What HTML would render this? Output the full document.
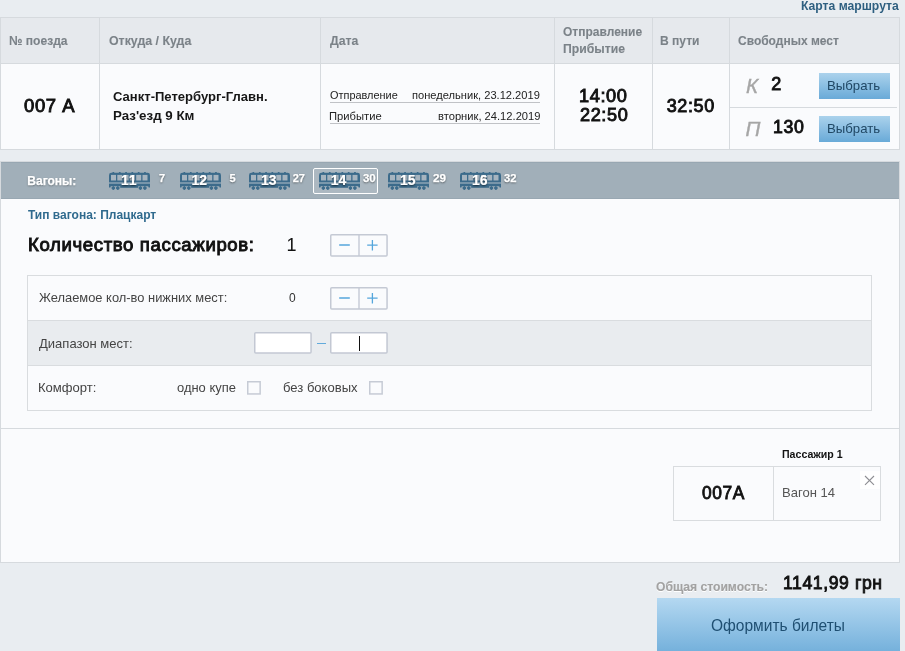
<!DOCTYPE html>
<html lang="ru"><head><meta charset="utf-8"><title>Билеты</title>
<style>
html,body{margin:0;padding:0}
body{width:905px;height:651px;overflow:hidden;background:#e9edf1;font-family:"Liberation Sans", sans-serif;position:relative}
.t{position:absolute;white-space:nowrap;transform-origin:0 50%;line-height:normal}
.a{position:absolute;box-sizing:border-box}
.tl{position:absolute;left:0;top:0;width:905px;height:651px;will-change:transform}
.wg{position:absolute;top:172px}
.btn{position:absolute;box-sizing:border-box;background:linear-gradient(#abd2ec,#69aad8)}
.st{position:absolute;box-sizing:border-box;border:1px solid #c4cad3;background:#fafbfd;border-radius:1px}
.inp{position:absolute;box-sizing:border-box;border:1px solid #bfc6d0;background:#fff;border-radius:1px}
.cb{position:absolute;box-sizing:border-box;width:14px;height:14px;border:1px solid #c4cad3;background:#fafbfd}
</style></head><body>
<!-- table -->
<div class="a" style="left:0;top:17px;width:900px;height:133px;border:1px solid #d6dade;background:#fafbfd"></div>
<div class="a" style="left:1px;top:18px;width:898px;height:45px;background:#e6e9ed"></div>
<div class="a" style="left:1px;top:63px;width:898px;height:1px;background:#d6dade"></div>
<div class="a" style="left:99px;top:18px;width:1px;height:131px;background:#d6dade"></div>
<div class="a" style="left:320px;top:18px;width:1px;height:131px;background:#d6dade"></div>
<div class="a" style="left:554px;top:18px;width:1px;height:131px;background:#d6dade"></div>
<div class="a" style="left:652px;top:18px;width:1px;height:131px;background:#d6dade"></div>
<div class="a" style="left:729px;top:18px;width:1px;height:131px;background:#d6dade"></div>
<div class="a" style="left:730px;top:107px;width:167px;height:1px;background:#d6dade"></div>
<div class="a" style="left:330px;top:102px;width:210px;height:1px;background:#c0c2c6"></div>
<div class="a" style="left:330px;top:123px;width:210px;height:1px;background:#c0c2c6"></div>
<div class="btn" style="left:819px;top:73px;width:71px;height:26px"></div>
<div class="btn" style="left:819px;top:116px;width:71px;height:26px"></div>
<!-- wagons panel -->
<div class="a" style="left:0;top:161px;width:900px;height:402px;border:1px solid #d6dade;background:#fafbfd"></div>
<div class="a" style="left:1px;top:162px;width:898px;height:37px;background:#a1afb9;border-top:1px solid #98a7b2;border-bottom:1px solid #98a7b2"></div>
<div class="a" style="left:313px;top:168px;width:65px;height:26px;border:1px solid #fff;border-radius:2px;background:rgba(255,255,255,.12)"></div>
<svg class="wg" style="left:109px" width="41" height="18" viewBox="0 0 41 18">
<g fill="#3c6b8b"><rect x="3.5" y="0" width="1.7" height="1.5"/><rect x="9.9" y="0" width="1.7" height="1.5"/><rect x="16.2" y="0" width="1.7" height="1.5"/><rect x="22.5" y="0" width="1.7" height="1.5"/><rect x="28.8" y="0" width="1.7" height="1.5"/><rect x="35.1" y="0" width="1.7" height="1.5"/>
<path d="M0 3.2Q0 .8 2.4 .8H38.6Q41 .8 41 3.2V10.6H0Z"/>
<path d="M0 11.4H41V15.4L39.6 15.6L39.2 14.2H1.8L1.4 15.6L0 15.4Z"/>
<rect x="11.2" y="13" width="18" height="2.8"/>
<path d="M4.3 14L6.3 16.1L4.3 18L2.3 16.1ZM8.8 14L10.8 16.1L8.8 18L6.8 16.1ZM31.4 14L33.4 16.1L31.4 18L29.4 16.1ZM35.9 14L37.9 16.1L35.9 18L33.9 16.1Z"/>
<circle cx="4.3" cy="16.1" r="1.6"/><circle cx="8.8" cy="16.1" r="1.6"/><circle cx="31.4" cy="16.1" r="1.6"/><circle cx="35.9" cy="16.1" r="1.6"/></g>
<rect x="0" y="10.6" width="41" height=".8" fill="#86a3b7"/>
<g fill="#a6b4bf"><rect x="2" y="2.9" width="5" height="5.6"/><rect x="8.3" y="2.9" width="5" height="5.6"/><rect x="14.6" y="2.9" width="5" height="5.6"/><rect x="20.9" y="2.9" width="5" height="5.6"/><rect x="27.2" y="2.9" width="5" height="5.6"/><rect x="33.5" y="2.9" width="5" height="5.6"/></g>
</svg><svg class="wg" style="left:179.5px" width="41" height="18" viewBox="0 0 41 18">
<g fill="#3c6b8b"><rect x="3.5" y="0" width="1.7" height="1.5"/><rect x="9.9" y="0" width="1.7" height="1.5"/><rect x="16.2" y="0" width="1.7" height="1.5"/><rect x="22.5" y="0" width="1.7" height="1.5"/><rect x="28.8" y="0" width="1.7" height="1.5"/><rect x="35.1" y="0" width="1.7" height="1.5"/>
<path d="M0 3.2Q0 .8 2.4 .8H38.6Q41 .8 41 3.2V10.6H0Z"/>
<path d="M0 11.4H41V15.4L39.6 15.6L39.2 14.2H1.8L1.4 15.6L0 15.4Z"/>
<rect x="11.2" y="13" width="18" height="2.8"/>
<path d="M4.3 14L6.3 16.1L4.3 18L2.3 16.1ZM8.8 14L10.8 16.1L8.8 18L6.8 16.1ZM31.4 14L33.4 16.1L31.4 18L29.4 16.1ZM35.9 14L37.9 16.1L35.9 18L33.9 16.1Z"/>
<circle cx="4.3" cy="16.1" r="1.6"/><circle cx="8.8" cy="16.1" r="1.6"/><circle cx="31.4" cy="16.1" r="1.6"/><circle cx="35.9" cy="16.1" r="1.6"/></g>
<rect x="0" y="10.6" width="41" height=".8" fill="#86a3b7"/>
<g fill="#a6b4bf"><rect x="2" y="2.9" width="5" height="5.6"/><rect x="8.3" y="2.9" width="5" height="5.6"/><rect x="14.6" y="2.9" width="5" height="5.6"/><rect x="20.9" y="2.9" width="5" height="5.6"/><rect x="27.2" y="2.9" width="5" height="5.6"/><rect x="33.5" y="2.9" width="5" height="5.6"/></g>
</svg><svg class="wg" style="left:249px" width="41" height="18" viewBox="0 0 41 18">
<g fill="#3c6b8b"><rect x="3.5" y="0" width="1.7" height="1.5"/><rect x="9.9" y="0" width="1.7" height="1.5"/><rect x="16.2" y="0" width="1.7" height="1.5"/><rect x="22.5" y="0" width="1.7" height="1.5"/><rect x="28.8" y="0" width="1.7" height="1.5"/><rect x="35.1" y="0" width="1.7" height="1.5"/>
<path d="M0 3.2Q0 .8 2.4 .8H38.6Q41 .8 41 3.2V10.6H0Z"/>
<path d="M0 11.4H41V15.4L39.6 15.6L39.2 14.2H1.8L1.4 15.6L0 15.4Z"/>
<rect x="11.2" y="13" width="18" height="2.8"/>
<path d="M4.3 14L6.3 16.1L4.3 18L2.3 16.1ZM8.8 14L10.8 16.1L8.8 18L6.8 16.1ZM31.4 14L33.4 16.1L31.4 18L29.4 16.1ZM35.9 14L37.9 16.1L35.9 18L33.9 16.1Z"/>
<circle cx="4.3" cy="16.1" r="1.6"/><circle cx="8.8" cy="16.1" r="1.6"/><circle cx="31.4" cy="16.1" r="1.6"/><circle cx="35.9" cy="16.1" r="1.6"/></g>
<rect x="0" y="10.6" width="41" height=".8" fill="#86a3b7"/>
<g fill="#a6b4bf"><rect x="2" y="2.9" width="5" height="5.6"/><rect x="8.3" y="2.9" width="5" height="5.6"/><rect x="14.6" y="2.9" width="5" height="5.6"/><rect x="20.9" y="2.9" width="5" height="5.6"/><rect x="27.2" y="2.9" width="5" height="5.6"/><rect x="33.5" y="2.9" width="5" height="5.6"/></g>
</svg><svg class="wg" style="left:319px" width="41" height="18" viewBox="0 0 41 18">
<g fill="#3c6b8b"><rect x="3.5" y="0" width="1.7" height="1.5"/><rect x="9.9" y="0" width="1.7" height="1.5"/><rect x="16.2" y="0" width="1.7" height="1.5"/><rect x="22.5" y="0" width="1.7" height="1.5"/><rect x="28.8" y="0" width="1.7" height="1.5"/><rect x="35.1" y="0" width="1.7" height="1.5"/>
<path d="M0 3.2Q0 .8 2.4 .8H38.6Q41 .8 41 3.2V10.6H0Z"/>
<path d="M0 11.4H41V15.4L39.6 15.6L39.2 14.2H1.8L1.4 15.6L0 15.4Z"/>
<rect x="11.2" y="13" width="18" height="2.8"/>
<path d="M4.3 14L6.3 16.1L4.3 18L2.3 16.1ZM8.8 14L10.8 16.1L8.8 18L6.8 16.1ZM31.4 14L33.4 16.1L31.4 18L29.4 16.1ZM35.9 14L37.9 16.1L35.9 18L33.9 16.1Z"/>
<circle cx="4.3" cy="16.1" r="1.6"/><circle cx="8.8" cy="16.1" r="1.6"/><circle cx="31.4" cy="16.1" r="1.6"/><circle cx="35.9" cy="16.1" r="1.6"/></g>
<rect x="0" y="10.6" width="41" height=".8" fill="#86a3b7"/>
<g fill="#a6b4bf"><rect x="2" y="2.9" width="5" height="5.6"/><rect x="8.3" y="2.9" width="5" height="5.6"/><rect x="14.6" y="2.9" width="5" height="5.6"/><rect x="20.9" y="2.9" width="5" height="5.6"/><rect x="27.2" y="2.9" width="5" height="5.6"/><rect x="33.5" y="2.9" width="5" height="5.6"/></g>
</svg><svg class="wg" style="left:388px" width="41" height="18" viewBox="0 0 41 18">
<g fill="#3c6b8b"><rect x="3.5" y="0" width="1.7" height="1.5"/><rect x="9.9" y="0" width="1.7" height="1.5"/><rect x="16.2" y="0" width="1.7" height="1.5"/><rect x="22.5" y="0" width="1.7" height="1.5"/><rect x="28.8" y="0" width="1.7" height="1.5"/><rect x="35.1" y="0" width="1.7" height="1.5"/>
<path d="M0 3.2Q0 .8 2.4 .8H38.6Q41 .8 41 3.2V10.6H0Z"/>
<path d="M0 11.4H41V15.4L39.6 15.6L39.2 14.2H1.8L1.4 15.6L0 15.4Z"/>
<rect x="11.2" y="13" width="18" height="2.8"/>
<path d="M4.3 14L6.3 16.1L4.3 18L2.3 16.1ZM8.8 14L10.8 16.1L8.8 18L6.8 16.1ZM31.4 14L33.4 16.1L31.4 18L29.4 16.1ZM35.9 14L37.9 16.1L35.9 18L33.9 16.1Z"/>
<circle cx="4.3" cy="16.1" r="1.6"/><circle cx="8.8" cy="16.1" r="1.6"/><circle cx="31.4" cy="16.1" r="1.6"/><circle cx="35.9" cy="16.1" r="1.6"/></g>
<rect x="0" y="10.6" width="41" height=".8" fill="#86a3b7"/>
<g fill="#a6b4bf"><rect x="2" y="2.9" width="5" height="5.6"/><rect x="8.3" y="2.9" width="5" height="5.6"/><rect x="14.6" y="2.9" width="5" height="5.6"/><rect x="20.9" y="2.9" width="5" height="5.6"/><rect x="27.2" y="2.9" width="5" height="5.6"/><rect x="33.5" y="2.9" width="5" height="5.6"/></g>
</svg><svg class="wg" style="left:460px" width="41" height="18" viewBox="0 0 41 18">
<g fill="#3c6b8b"><rect x="3.5" y="0" width="1.7" height="1.5"/><rect x="9.9" y="0" width="1.7" height="1.5"/><rect x="16.2" y="0" width="1.7" height="1.5"/><rect x="22.5" y="0" width="1.7" height="1.5"/><rect x="28.8" y="0" width="1.7" height="1.5"/><rect x="35.1" y="0" width="1.7" height="1.5"/>
<path d="M0 3.2Q0 .8 2.4 .8H38.6Q41 .8 41 3.2V10.6H0Z"/>
<path d="M0 11.4H41V15.4L39.6 15.6L39.2 14.2H1.8L1.4 15.6L0 15.4Z"/>
<rect x="11.2" y="13" width="18" height="2.8"/>
<path d="M4.3 14L6.3 16.1L4.3 18L2.3 16.1ZM8.8 14L10.8 16.1L8.8 18L6.8 16.1ZM31.4 14L33.4 16.1L31.4 18L29.4 16.1ZM35.9 14L37.9 16.1L35.9 18L33.9 16.1Z"/>
<circle cx="4.3" cy="16.1" r="1.6"/><circle cx="8.8" cy="16.1" r="1.6"/><circle cx="31.4" cy="16.1" r="1.6"/><circle cx="35.9" cy="16.1" r="1.6"/></g>
<rect x="0" y="10.6" width="41" height=".8" fill="#86a3b7"/>
<g fill="#a6b4bf"><rect x="2" y="2.9" width="5" height="5.6"/><rect x="8.3" y="2.9" width="5" height="5.6"/><rect x="14.6" y="2.9" width="5" height="5.6"/><rect x="20.9" y="2.9" width="5" height="5.6"/><rect x="27.2" y="2.9" width="5" height="5.6"/><rect x="33.5" y="2.9" width="5" height="5.6"/></g>
</svg>
<div class="a" style="left:1px;top:428px;width:898px;height:1px;background:#d6dade"></div>
<!-- steppers -->
<svg class="a" style="left:330px;top:234px" width="58" height="23" viewBox="0 0 58 23"><rect x=".75" y=".85" width="56.3" height="21.2" rx="1" fill="#fafbfd" stroke="#c4c9d4" stroke-width="1.5"/><path d="M29 1V22" stroke="#c4c9d4" stroke-width="1.4"/><path d="M9.2 11H19.8M37.2 11.2H47.6M42.4 6V16.4" stroke="#55a6dc" stroke-width="1.3" fill="none"/></svg>
<svg class="a" style="left:330px;top:287px" width="58" height="23" viewBox="0 0 58 23"><rect x=".75" y=".85" width="56.3" height="21.2" rx="1" fill="#fafbfd" stroke="#c4c9d4" stroke-width="1.5"/><path d="M29 1V22" stroke="#c4c9d4" stroke-width="1.4"/><path d="M9.2 11H19.8M37.2 11.2H47.6M42.4 6V16.4" stroke="#55a6dc" stroke-width="1.3" fill="none"/></svg>
<!-- inner box -->
<div class="a" style="left:27px;top:275px;width:845px;height:136px;border:1px solid #d9dcdf"></div>
<div class="a" style="left:28px;top:321px;width:843px;height:45px;background:#e9ecef"></div>
<div class="a" style="left:28px;top:320px;width:843px;height:1px;background:#d9dcdf"></div>
<div class="a" style="left:28px;top:365px;width:843px;height:1px;background:#d9dcdf"></div>
<svg class="a" style="left:254px;top:332px" width="58" height="22" viewBox="0 0 58 22"><rect x=".75" y=".75" width="56.3" height="20.2" rx="1" fill="#fff" stroke="#c3c8d3" stroke-width="1.5"/></svg>
<svg class="a" style="left:330px;top:332px" width="58" height="22" viewBox="0 0 58 22"><rect x=".75" y=".75" width="56.3" height="20.2" rx="1" fill="#fff" stroke="#c3c8d3" stroke-width="1.5"/></svg>
<div class="a" style="left:317px;top:342.5px;width:9px;height:1.3px;background:#62aadb"></div>
<div class="a" style="left:359px;top:336px;width:1.3px;height:15px;background:#111"></div>
<svg class="a" style="left:247px;top:381px" width="14" height="14" viewBox="0 0 14 14"><rect x=".75" y=".75" width="12.4" height="12.2" fill="#fafbfd" stroke="#c6cbd5" stroke-width="1.5"/></svg>
<svg class="a" style="left:369px;top:381px" width="14" height="14" viewBox="0 0 14 14"><rect x=".75" y=".75" width="12.4" height="12.2" fill="#fafbfd" stroke="#c6cbd5" stroke-width="1.5"/></svg>
<!-- ticket -->
<div class="a" style="left:673px;top:466px;width:208px;height:55px;border:1px solid #d9dcdf"></div>
<div class="a" style="left:773px;top:467px;width:1px;height:53px;background:#d9dcdf"></div>
<div class="a" style="left:860px;top:471px;width:20px;height:18px;background:#fff"><svg width="20" height="18" viewBox="0 0 20 18"><path d="M5 5L14 13.8M14 5L5 13.8" stroke="#8e8e93" stroke-width="1.1" fill="none"/></svg></div>
<!-- order button -->
<div class="btn" style="left:657px;top:598px;width:243px;height:60px;background:linear-gradient(#b4d8f1,#6dacd9)"></div>
<div class="tl">
<span id="map" class="t" style="left:800.94px;top:-1.11px;font-size:12px;font-weight:700;color:#2e5f80;transform:scaleX(1.0135);">Карта маршрута</span>
<span id="h1" class="t" style="left:8.80px;top:33.02px;font-size:13px;font-weight:700;color:#7b8288;transform:scaleX(0.9280);-webkit-text-stroke:.1px #7b8288;">№ поезда</span>
<span id="h2" class="t" style="left:108.52px;top:33.02px;font-size:13px;font-weight:700;color:#7b8288;transform:scaleX(0.9507);-webkit-text-stroke:.1px #7b8288;">Откуда / Куда</span>
<span id="h3" class="t" style="left:330.00px;top:33.02px;font-size:13px;font-weight:700;color:#7b8288;transform:scaleX(0.9421);-webkit-text-stroke:.1px #7b8288;">Дата</span>
<span id="h4a" class="t" style="left:563.29px;top:24.27px;font-size:13px;font-weight:700;color:#7b8288;transform:scaleX(0.9233);-webkit-text-stroke:.1px #7b8288;">Отправление</span>
<span id="h4b" class="t" style="left:563.05px;top:41.02px;font-size:13px;font-weight:700;color:#7b8288;transform:scaleX(0.9382);-webkit-text-stroke:.1px #7b8288;">Прибытие</span>
<span id="h5" class="t" style="left:660.30px;top:33.02px;font-size:13px;font-weight:700;color:#7b8288;transform:scaleX(0.9268);-webkit-text-stroke:.1px #7b8288;">В пути</span>
<span id="h6" class="t" style="left:737.94px;top:33.02px;font-size:13px;font-weight:700;color:#7b8288;transform:scaleX(0.9226);-webkit-text-stroke:.1px #7b8288;">Свободных мест</span>
<span id="tn" class="t" style="left:23.74px;top:96.01px;font-size:18px;font-weight:400;color:#111;transform:scaleX(1.0251);-webkit-text-stroke:.9px #111;letter-spacing:.6px;">007 А</span>
<span id="st1" class="t" style="left:113.25px;top:88.77px;font-size:13px;font-weight:700;color:#161616;transform:scaleX(1.0033);">Санкт-Петербург-Главн.</span>
<span id="st2" class="t" style="left:112.98px;top:108.02px;font-size:13px;font-weight:700;color:#161616;transform:scaleX(1.0257);">Раз'езд 9 Км</span>
<span id="d1a" class="t" style="left:329.50px;top:89.25px;font-size:11px;font-weight:400;color:#222;transform:scaleX(0.9926);">Отправление</span>
<span id="d1b" class="t" style="left:412.24px;top:89.25px;font-size:11px;font-weight:400;color:#222;transform:scaleX(1.0100);">понедельник, 23.12.2019</span>
<span id="d2a" class="t" style="left:329.24px;top:110.00px;font-size:11px;font-weight:400;color:#222;transform:scaleX(1.0198);">Прибытие</span>
<span id="d2b" class="t" style="left:437.74px;top:110.00px;font-size:11px;font-weight:400;color:#222;transform:scaleX(1.0150);">вторник, 24.12.2019</span>
<span id="t1" class="t" style="left:579.24px;top:85.76px;font-size:18px;font-weight:400;color:#111;transform:scaleX(1.0108);-webkit-text-stroke:.9px #111;letter-spacing:.6px;">14:00</span>
<span id="t2" class="t" style="left:579.50px;top:104.76px;font-size:18px;font-weight:400;color:#111;transform:scaleX(1.0053);-webkit-text-stroke:.9px #111;letter-spacing:.6px;">22:50</span>
<span id="dur" class="t" style="left:666.75px;top:95.51px;font-size:18px;font-weight:400;color:#111;-webkit-text-stroke:.9px #111;letter-spacing:.6px;">32:50</span>
<span id="k" class="t" style="left:746.08px;top:73.80px;font-size:20.5px;font-weight:400;font-style:italic;color:#a6a6a6;-webkit-text-stroke:.4px #a6a6a6;">К</span>
<span id="kn" class="t" style="left:771.17px;top:74.01px;font-size:18px;font-weight:400;color:#111;-webkit-text-stroke:.9px #111;letter-spacing:.6px;">2</span>
<span id="p" class="t" style="left:745.55px;top:116.71px;font-size:20.5px;font-weight:400;font-style:italic;color:#a6a6a6;-webkit-text-stroke:.4px #a6a6a6;">П</span>
<span id="pn" class="t" style="left:773.26px;top:117.01px;font-size:18px;font-weight:400;color:#111;transform:scaleX(0.9851);-webkit-text-stroke:.9px #111;letter-spacing:.6px;">130</span>
<span id="b1" class="t" style="left:827.49px;top:77.52px;font-size:13px;font-weight:400;color:#204865;transform:scaleX(1.0148);">Выбрать</span>
<span id="b2" class="t" style="left:827.49px;top:120.52px;font-size:13px;font-weight:400;color:#204865;transform:scaleX(1.0148);">Выбрать</span>
<span id="wl" class="t" style="left:27.30px;top:173.76px;font-size:12px;font-weight:700;color:#fff;text-shadow:0 1px 2px rgba(0,0,0,.4);-webkit-text-stroke:.25px #fff;">Вагоны:</span>
<span id="tw" class="t" style="left:28.00px;top:208.26px;font-size:12px;font-weight:700;color:#2f6a8e;">Тип вагона: Плацкарт</span>
<span id="qp" class="t" style="left:27.97px;top:234.76px;font-size:18px;font-weight:400;color:#111;transform:scaleX(1.0333);-webkit-text-stroke:.9px #111;letter-spacing:.6px;">Количество пассажиров:</span>
<span id="q1" class="t" style="left:286.38px;top:234.76px;font-size:18px;font-weight:400;color:#111;">1</span>
<span id="lw" class="t" style="left:38.50px;top:290.00px;font-size:13px;font-weight:400;color:#444;transform:scaleX(0.9912);">Желаемое кол-во нижних мест:</span>
<span id="l0" class="t" style="left:289.00px;top:291.01px;font-size:12px;font-weight:400;color:#333;">0</span>
<span id="dm" class="t" style="left:38.75px;top:335.50px;font-size:13px;font-weight:400;color:#444;transform:scaleX(1.0016);">Диапазон мест:</span>
<span id="cf" class="t" style="left:37.60px;top:380.25px;font-size:13px;font-weight:400;color:#444;transform:scaleX(1.0036);">Комфорт:</span>
<span id="c1" class="t" style="left:177.00px;top:380.25px;font-size:13px;font-weight:400;color:#444;transform:scaleX(0.9957);">одно купе</span>
<span id="c2" class="t" style="left:283.00px;top:380.25px;font-size:13px;font-weight:400;color:#444;transform:scaleX(1.0034);">без боковых</span>
<span id="ps" class="t" style="left:781.88px;top:448.19px;font-size:11px;font-weight:700;color:#111;transform:scaleX(0.9629);">Пассажир 1</span>
<span id="tk" class="t" style="left:702.36px;top:482.81px;font-size:18px;font-weight:400;color:#111;transform:scaleX(0.9627);-webkit-text-stroke:.9px #111;letter-spacing:.6px;">007А</span>
<span id="vg" class="t" style="left:782.30px;top:485.30px;font-size:13px;font-weight:400;color:#555;transform:scaleX(1.0039);">Вагон 14</span>
<span id="os" class="t" style="left:656.19px;top:580.01px;font-size:12px;font-weight:700;color:#a2a2a2;transform:scaleX(1.0100);text-shadow:0 1px 0 #fff;-webkit-text-stroke:.15px #a2a2a2;">Общая стоимость:</span>
<span id="pr" class="t" style="left:783.27px;top:572.70px;font-size:18px;font-weight:400;color:#111;transform:scaleX(0.9784);-webkit-text-stroke:.9px #111;letter-spacing:.6px;">1141,99 грн</span>
<span id="ob" class="t" style="left:710.67px;top:617.20px;font-size:16px;font-weight:400;color:#1f4f72;transform:scaleX(0.9703);">Оформить билеты</span>
<span id="wn0" class="t" style="left:120.88px;top:172.00px;font-size:14px;font-weight:700;color:#fff;text-shadow:0 1px 2px rgba(0,0,0,.6);-webkit-text-stroke:.2px #fff;font-kerning:none;">11</span>
<span id="wc0" class="t" style="left:158.88px;top:171.82px;font-size:11px;font-weight:700;color:#fff;text-shadow:0 1px 2px rgba(0,0,0,.55);-webkit-text-stroke:.25px #fff;">7</span>
<span id="wn1" class="t" style="left:191.50px;top:172.00px;font-size:14px;font-weight:700;color:#fff;text-shadow:0 1px 2px rgba(0,0,0,.6);-webkit-text-stroke:.2px #fff;font-kerning:none;">12</span>
<span id="wc1" class="t" style="left:229.38px;top:171.82px;font-size:11px;font-weight:700;color:#fff;text-shadow:0 1px 2px rgba(0,0,0,.55);-webkit-text-stroke:.25px #fff;">5</span>
<span id="wn2" class="t" style="left:261.00px;top:172.00px;font-size:14px;font-weight:700;color:#fff;text-shadow:0 1px 2px rgba(0,0,0,.6);-webkit-text-stroke:.2px #fff;font-kerning:none;">13</span>
<span id="wc2" class="t" style="left:292.75px;top:171.82px;font-size:11px;font-weight:700;color:#fff;text-shadow:0 1px 2px rgba(0,0,0,.55);-webkit-text-stroke:.25px #fff;">27</span>
<span id="wn3" class="t" style="left:330.75px;top:172.00px;font-size:14px;font-weight:700;color:#fff;text-shadow:0 1px 2px rgba(0,0,0,.6);-webkit-text-stroke:.2px #fff;font-kerning:none;">14</span>
<span id="wc3" class="t" style="left:363.00px;top:171.82px;font-size:11px;font-weight:700;color:#fff;transform:scaleX(1.0417);text-shadow:0 1px 2px rgba(0,0,0,.55);-webkit-text-stroke:.25px #fff;">30</span>
<span id="wn4" class="t" style="left:399.88px;top:172.00px;font-size:14px;font-weight:700;color:#fff;text-shadow:0 1px 2px rgba(0,0,0,.6);-webkit-text-stroke:.2px #fff;font-kerning:none;">15</span>
<span id="wc4" class="t" style="left:432.73px;top:171.82px;font-size:11px;font-weight:700;color:#fff;transform:scaleX(1.0638);text-shadow:0 1px 2px rgba(0,0,0,.55);-webkit-text-stroke:.25px #fff;">29</span>
<span id="wn5" class="t" style="left:472.00px;top:172.00px;font-size:14px;font-weight:700;color:#fff;text-shadow:0 1px 2px rgba(0,0,0,.6);-webkit-text-stroke:.2px #fff;font-kerning:none;">16</span>
<span id="wc5" class="t" style="left:503.50px;top:171.82px;font-size:11px;font-weight:700;color:#fff;transform:scaleX(1.0208);text-shadow:0 1px 2px rgba(0,0,0,.55);-webkit-text-stroke:.25px #fff;">32</span>
</div>
</body></html>
